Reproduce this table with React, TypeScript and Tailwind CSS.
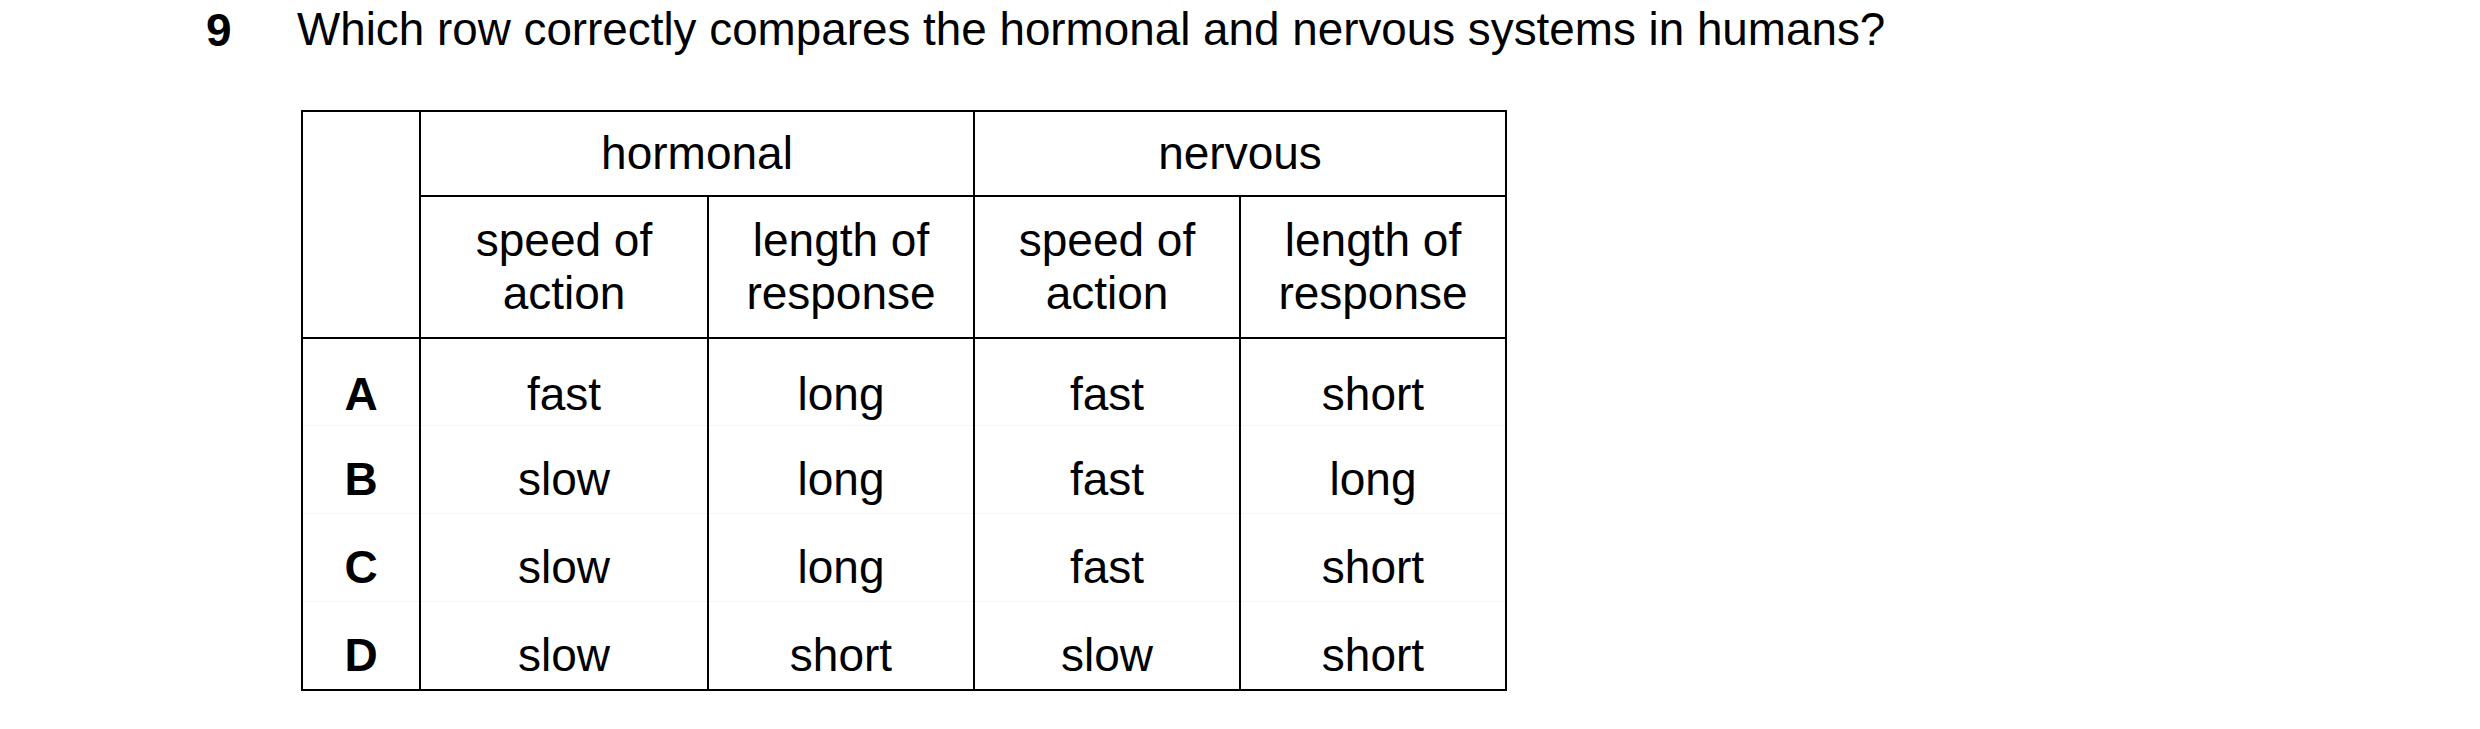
const rows = [
  { letter: "A", cells: ["fast", "long", "fast", "short"] },
  { letter: "B", cells: ["slow", "long", "fast", "long"] },
  { letter: "C", cells: ["slow", "long", "fast", "short"] },
  { letter: "D", cells: ["slow", "short", "slow", "short"] },
];

export default function App() {
  return (
    <div className="min-h-[729px] bg-white pt-[4px] pl-[206px] font-['Liberation_Sans',Arial,sans-serif] text-[46px] leading-[1.15] text-black">
      {/* Question */}
      <div className="flex">
        <span className="w-[91px] font-bold">9</span>
        <span className="text-[45.8px]">
          Which row correctly compares the hormonal and nervous systems in humans?
        </span>
      </div>

      <table className="mt-[53px] ml-[95px] table-fixed border-collapse text-center">
        <colgroup>
          <col className="w-[118px]" />
          <col className="w-[288px]" />
          <col className="w-[266px]" />
          <col className="w-[266px]" />
          <col className="w-[266px]" />
        </colgroup>
        <thead>
          <tr className="h-[85px]">
            <th rowSpan={2} className="border-2 border-black p-0 font-normal" />
            <th colSpan={2} className="border-2 border-black p-0 font-normal">
              hormonal
            </th>
            <th colSpan={2} className="border-2 border-black p-0 font-normal">
              nervous
            </th>
          </tr>
          <tr className="h-[142px]">
            <th className="border-2 border-black p-0 font-normal">
              speed of
              <br />
              action
            </th>
            <th className="border-2 border-black p-0 font-normal">
              length of
              <br />
              response
            </th>
            <th className="border-2 border-black p-0 font-normal">
              speed of
              <br />
              action
            </th>
            <th className="border-2 border-black p-0 font-normal">
              length of
              <br />
              response
            </th>
          </tr>
        </thead>
        <tbody>
          {rows.map((r, i) => (
            <tr key={r.letter} className="h-[88px]">
              <td
                className={`border-x-2 border-y border-x-black border-y-[#f6f6f6] p-0 align-top font-bold ${
                  i === 0 ? "pt-[29px]" : "pt-[27px]"
                } ${i === rows.length - 1 ? "border-b-2 border-b-black" : ""}`}
              >
                {r.letter}
              </td>
              {r.cells.map((c, j) => (
                <td
                  key={j}
                  className={`border-x-2 border-y border-x-black border-y-[#f6f6f6] p-0 align-top ${
                    i === 0 ? "pt-[29px]" : "pt-[27px]"
                  } ${i === rows.length - 1 ? "border-b-2 border-b-black" : ""}`}
                >
                  {c}
                </td>
              ))}
            </tr>
          ))}
        </tbody>
      </table>
    </div>
  );
}
